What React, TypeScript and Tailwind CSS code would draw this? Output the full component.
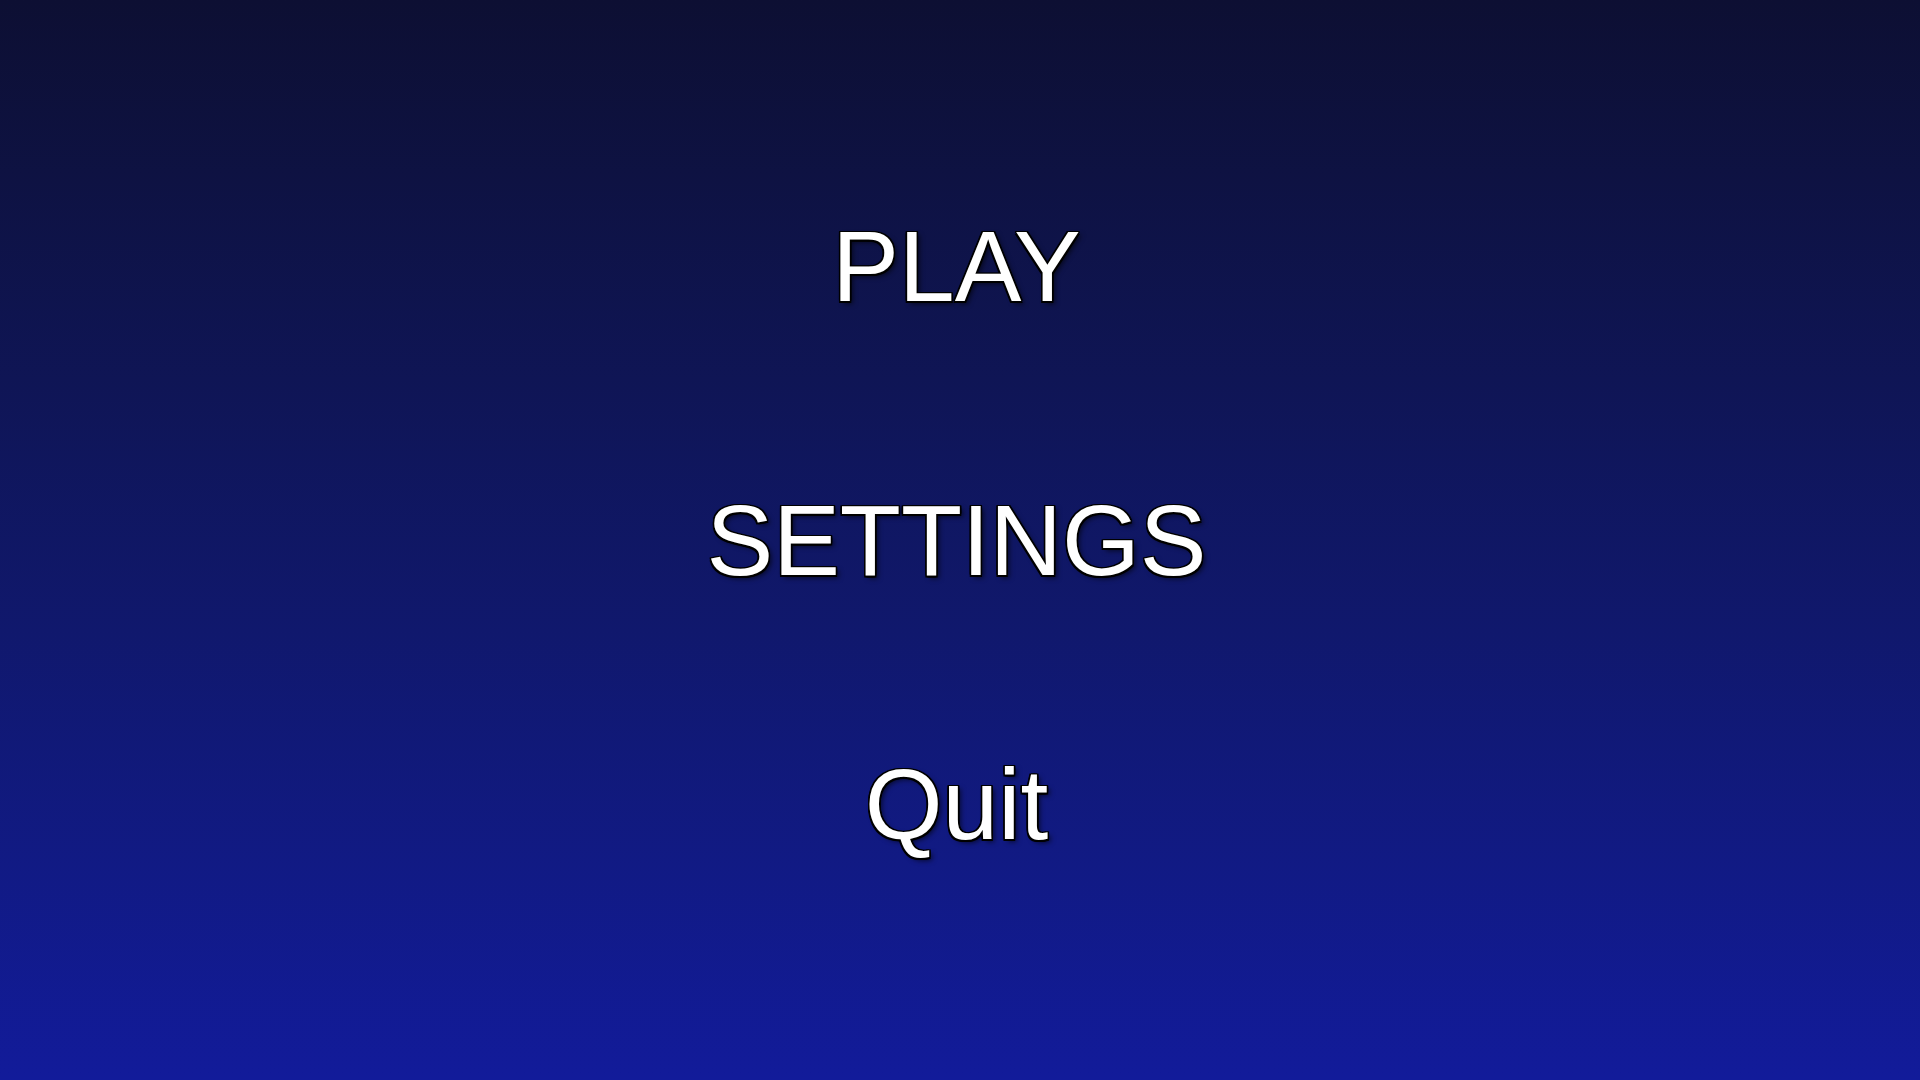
import React from 'react';

const items = [
  { label: 'PLAY', className: 'mt-[216px]' },
  { label: 'SETTINGS', className: 'mt-[174px]' },
  { label: 'Quit', className: 'mt-[164px]' },
];

const App: React.FC = () => {
  return (
    <div className="w-[1920px] h-[1080px] overflow-hidden pr-[7px] bg-linear-to-b from-[#0d0f33] to-[#121b9a] flex flex-col items-center font-['Liberation_Sans',Arial,sans-serif]">
      {items.map((item) => (
        <button
          key={item.label}
          className={`${item.className} text-white text-[100px] leading-none bg-transparent border-0 p-0 cursor-pointer [text-shadow:-1.5px_-1.5px_0_#000,1.5px_-1.5px_0_#000,-1.5px_1.5px_0_#000,1.5px_1.5px_0_#000,0_1.5px_0_#000,0_-1.5px_0_#000,1.5px_0_0_#000,-1.5px_0_0_#000,3px_3px_5px_rgba(0,0,0,0.6)]`}
        >
          {item.label}
        </button>
      ))}
    </div>
  );
};

export default App;
